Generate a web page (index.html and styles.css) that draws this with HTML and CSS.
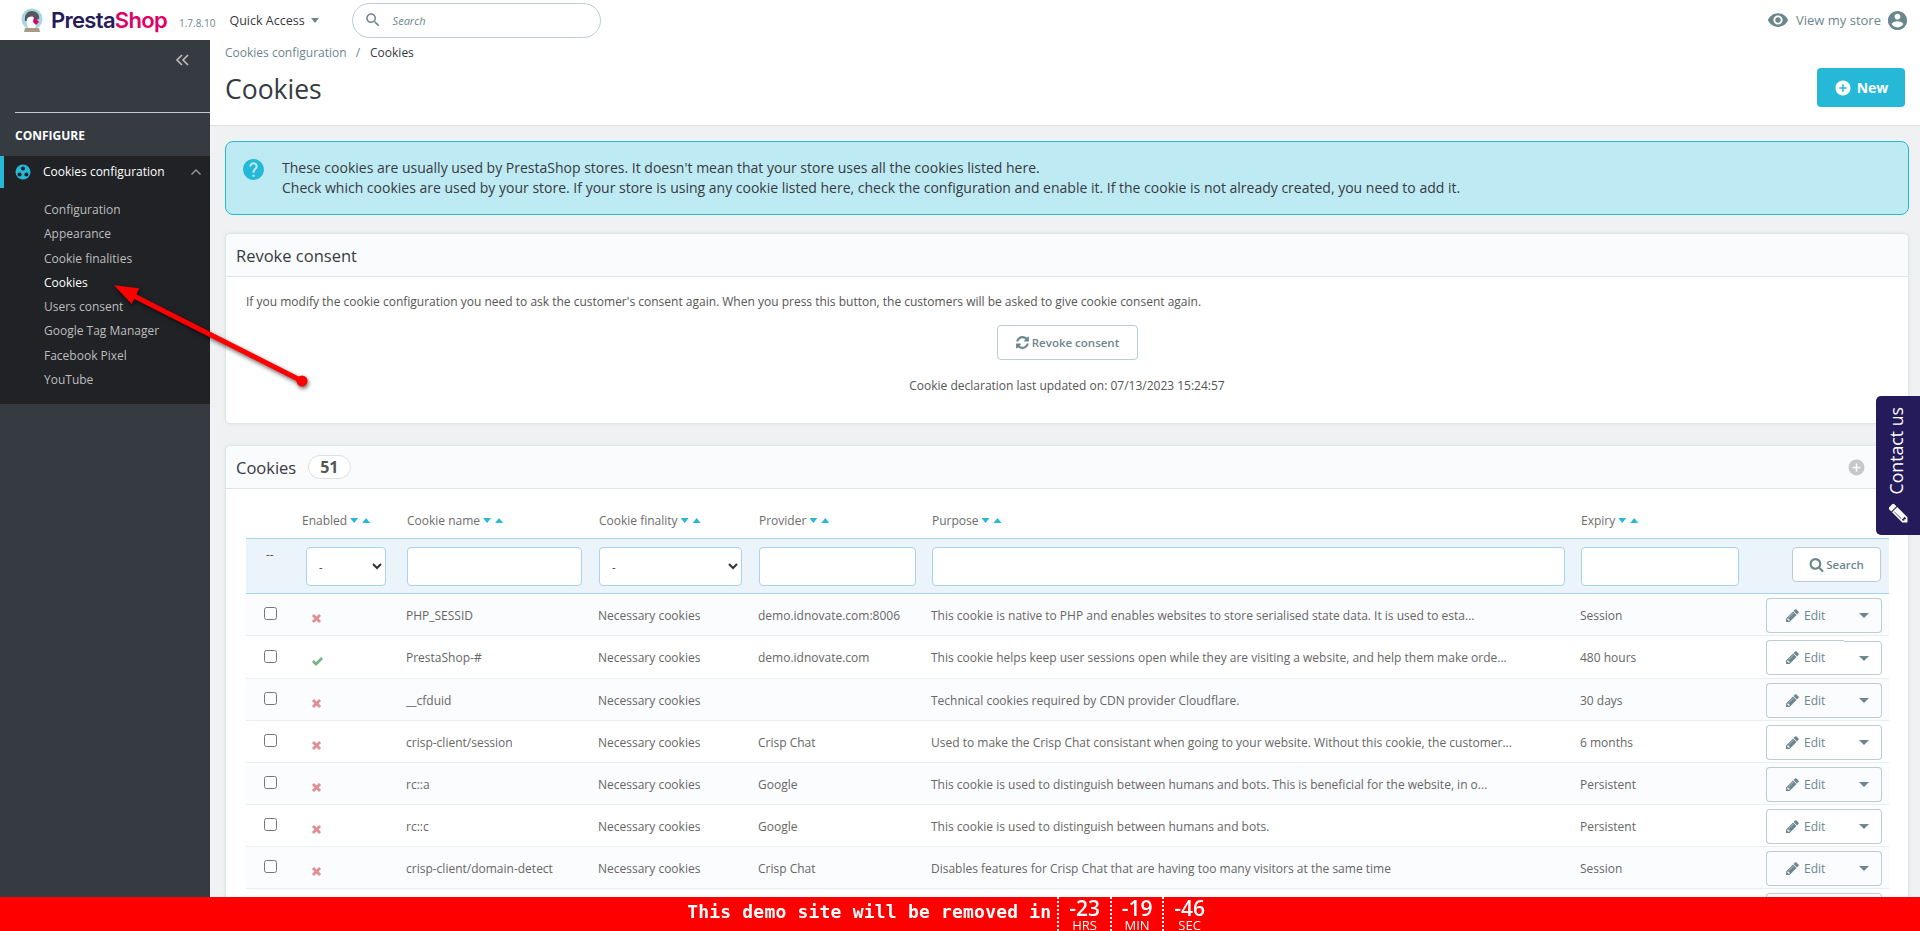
FILE: index.html
```html
<!DOCTYPE html>
<html lang="en">
<head>
    <meta charset="UTF-8">
    <meta name="viewport" content="width=device-width, initial-scale=1.0">
    <title>Cookies - PrestaShop</title>
    <link rel="stylesheet" href="styles.css">
</head>
<body>
    <!-- icon sprite -->
    <svg class="sprite" xmlns="http://www.w3.org/2000/svg">
        <symbol id="i-edit" viewBox="0 0 1792 1792"><path d="M491 1536l91-91-235-235-91 91v107h128v128h107zm523-928q0-22-22-22-10 0-17 7l-542 542q-7 7-7 17 0 22 22 22 10 0 17-7l542-542q7-7 7-17zm-54-192l416 416-832 832h-416v-416zm683 96q0 53-37 90l-166 166-416-416 166-165q36-38 90-38 53 0 91 38l235 234q37 39 37 91z"/></symbol>
        <symbol id="i-search" viewBox="0 0 24 24"><path d="M15.5 14h-.79l-.28-.27C15.41 12.59 16 11.11 16 9.5 16 5.91 13.09 3 9.5 3S3 5.91 3 9.5 5.91 16 9.5 16c1.61 0 3.09-.59 4.23-1.57l.27.28v.79l5 4.99L20.49 19l-4.99-5zm-6 0C7.01 14 5 11.99 5 9.5S7.01 5 9.5 5 14 7.01 14 9.5 11.99 14 9.5 14z"/></symbol>
        <symbol id="i-search-bold" viewBox="0 0 1792 1792"><path d="M1216 832q0-185-131.5-316.5t-316.5-131.5-316.5 131.5-131.5 316.5 131.5 316.5 316.5 131.5 316.5-131.5 131.5-316.5zm512 832q0 52-38 90t-90 38q-54 0-90-38l-343-342q-179 124-399 124-143 0-273.5-55.5t-225-150-150-225-55.5-273.5 55.5-273.5 150-225 225-150 273.5-55.5 273.5 55.5 225 150 150 225 55.5 273.5q0 220-124 399l343 343q37 37 37 90z"/></symbol>
        <symbol id="i-add" viewBox="0 0 24 24"><path d="M12 2C6.48 2 2 6.48 2 12s4.48 10 10 10 10-4.48 10-10S17.52 2 12 2zm5 11h-4v4h-2v-4H7v-2h4V7h2v4h4v2z"/></symbol>
        <symbol id="i-no" viewBox="0 0 12 12"><path d="M1 3.2 3.2 1 6 3.8 8.8 1 11 3.2 8.2 6 11 8.8 8.8 11 6 8.2 3.2 11 1 8.8 3.8 6z"/></symbol>
        <symbol id="i-yes" viewBox="0 0 14 12"><path d="M1 6.5 3 4.4 5.4 6.8 11 1.2 13 3.3 5.4 10.9z"/></symbol>
    </svg>

    <header class="topbar">
        <a class="logo">
            <svg class="logo-bird" viewBox="0 0 22 25" width="22" height="25">
                <circle cx="11" cy="11" r="10.5" fill="#a6d6e6"/>
                <path d="M4 13C3 6 7 3 11 3s8 3 7 8l-3 1-5 1z" fill="#55585c"/>
                <path d="M6 11c2-3 6-3 7-1l3 4-2 7H8c-2-3-3-6-2-10z" fill="#fff"/>
                <path d="M13 9l5 5-3 3-3-3z" fill="#df0067"/>
                <path d="M4 20h14l1 4H3z" fill="#a89a84"/>
            </svg>
            <span class="logo-text">Presta<b>Shop</b></span>
        </a>
        <span class="version">1.7.8.10</span>
        <span class="quick">Quick Access<i class="caret-down"></i></span>
        <div class="searchbox">
            <svg class="searchbox-icon" width="18" height="18"><use href="#i-search"/></svg>
            <span>Search</span>
        </div>
        <div class="top-right">
            <svg class="top-icon" viewBox="0 0 24 24" width="22" height="22"><path d="M12 4.5C7 4.5 2.73 7.61 1 12c1.73 4.39 6 7.5 11 7.5s9.27-3.11 11-7.5c-1.73-4.39-6-7.5-11-7.5zM12 17c-2.76 0-5-2.24-5-5s2.24-5 5-5 5 2.24 5 5-2.24 5-5 5zm0-8c-1.66 0-3 1.34-3 3s1.34 3 3 3 3-1.34 3-3-1.34-3-3-3z"/></svg>
            <span class="view-store">View my store</span>
            <svg class="top-icon" viewBox="0 0 24 24" width="23" height="23"><path d="M12 2C6.48 2 2 6.48 2 12s4.48 10 10 10 10-4.48 10-10S17.52 2 12 2zm0 3c1.66 0 3 1.34 3 3s-1.34 3-3 3-3-1.34-3-3 1.34-3 3-3zm0 14.2c-2.5 0-4.71-1.28-6-3.22.03-1.99 4-3.08 6-3.08 1.99 0 5.97 1.09 6 3.08-1.29 1.94-3.5 3.22-6 3.22z"/></svg>
        </div>
    </header>

    <div class="layout">
        <nav class="sidebar">
            <div class="collapse">
                <svg viewBox="0 0 15 12" width="15" height="12" fill="none" stroke="#bebebe" stroke-width="1.6"><path d="M7 1 2 6l5 5M13 1 8 6l5 5"/></svg>
            </div>
            <div class="nav-title">CONFIGURE</div>
            <div class="nav-group">
                <div class="nav-item">
                    <svg class="cookie-icon" viewBox="0 0 16 16" width="16" height="16">
                        <circle cx="8" cy="8" r="7.5" fill="#25b9d7"/>
                        <circle cx="8" cy="4.6" r="2" fill="#202226"/>
                        <circle cx="4.6" cy="10.4" r="2" fill="#202226"/>
                        <circle cx="11.4" cy="10.4" r="2" fill="#202226"/>
                    </svg>
                    <span>Cookies configuration</span>
                    <svg class="nav-chevron" viewBox="0 0 12 8" width="12" height="8" fill="none" stroke="#8f9296" stroke-width="1.5"><path d="M1.5 6.5 6 2l4.5 4.5"/></svg>
                </div>
                <ul class="subnav">
                    <li>Configuration</li>
                    <li>Appearance</li>
                    <li>Cookie finalities</li>
                    <li class="current">Cookies</li>
                    <li>Users consent</li>
                    <li>Google Tag Manager</li>
                    <li>Facebook Pixel</li>
                    <li>YouTube</li>
                </ul>
            </div>
        </nav>

        <main class="main">
            <div class="page-head">
                <div>
                    <div class="breadcrumb"><span class="crumb">Cookies configuration</span><span class="crumb-sep">/</span><span>Cookies</span></div>
                    <h1 class="page-title">Cookies</h1>
                </div>
                <button class="btn-new"><svg width="18" height="18"><use href="#i-add"/></svg>New</button>
            </div>

            <div class="content">
                <div class="alert">
                    <svg class="alert-icon" viewBox="0 0 24 24" width="25" height="25"><path d="M12 2C6.48 2 2 6.48 2 12s4.48 10 10 10 10-4.48 10-10S17.52 2 12 2zm1 17h-2v-2h2v2zm2.07-7.75l-.9.92C13.45 12.9 13 13.5 13 15h-2v-.5c0-1.1.45-2.1 1.17-2.83l1.24-1.26c.37-.36.59-.86.59-1.41 0-1.1-.9-2-2-2s-2 .9-2 2H8c0-2.21 1.79-4 4-4s4 1.79 4 4c0 .88-.36 1.68-.93 2.25z"/></svg>
                    <p>These cookies are usually used by PrestaShop stores. It doesn't mean that your store uses all the cookies listed here.<br>Check which cookies are used by your store. If your store is using any cookie listed here, check the configuration and enable it. If the cookie is not already created, you need to add it.</p>
                </div>

                <section class="panel">
                    <div class="panel-head">Revoke consent</div>
                    <div class="revoke-body">
                        <p class="revoke-text">If you modify the cookie configuration you need to ask the customer's consent again. When you press this button, the customers will be asked to give cookie consent again.</p>
                        <button class="btn-outline btn-revoke">
                            <svg viewBox="0 0 1792 1792" width="15" height="15"><path d="M1639 1056q0 5-1 7-64 268-268 434.5t-478 166.5q-146 0-282.5-55t-243.5-157l-129 129q-19 19-45 19t-45-19-19-45v-448q0-26 19-45t45-19h448q26 0 45 19t19 45-19 45l-137 137q71 66 161 102t187 36q134 0 250-65t186-179q11-17 53-117 8-23 30-23h192q13 0 22.5 9.5t9.5 22.5zm25-800v448q0 26-19 45t-45 19h-448q-26 0-45-19t-19-45 19-45l138-138q-148-137-349-137-134 0-250 65t-186 179q-11 17-53 117-8 23-30 23h-199q-13 0-22.5-9.5t-9.5-22.5v-7q65-268 270-434.5t480-166.5q146 0 284 55.5t245 156.5l130-129q19-19 45-19t45 19 19 45z"/></svg>Revoke consent
                        </button>
                        <p class="revoke-date">Cookie declaration last updated on: 07/13/2023 15:24:57</p>
                    </div>
                </section>

                <section class="panel panel-list">
                    <div class="panel-head">
                        <span>Cookies</span><span class="badge">51</span>
                        <svg class="panel-add" width="19" height="19"><use href="#i-add"/></svg>
                    </div>
                    <div class="table-wrap">
                        <table class="grid">
                            <colgroup>
                                <col class="c-check"><col class="c-enabled"><col class="c-name"><col class="c-finality"><col class="c-provider"><col class="c-purpose"><col class="c-expiry"><col class="c-actions">
                            </colgroup>
                            <thead>
                                <tr class="head-row">
                                    <th></th>
                                    <th class="th-enabled">Enabled<i class="sort"></i></th>
                                    <th>Cookie name<i class="sort"></i></th>
                                    <th>Cookie finality<i class="sort"></i></th>
                                    <th>Provider<i class="sort"></i></th>
                                    <th>Purpose<i class="sort"></i></th>
                                    <th>Expiry<i class="sort"></i></th>
                                    <th></th>
                                </tr>
                                <tr class="filter-row">
                                    <td class="filter-dash">--</td>
                                    <td><select class="f-enabled"><option>-</option></select></td>
                                    <td><input class="f-name" type="text"></td>
                                    <td><select class="f-finality"><option>-</option></select></td>
                                    <td><input class="f-provider" type="text"></td>
                                    <td><input class="f-purpose" type="text"></td>
                                    <td><input class="f-expiry" type="text"></td>
                                    <td class="cell-actions"><button class="btn-outline btn-search"><svg width="15" height="15"><use href="#i-search-bold"/></svg>Search</button></td>
                                </tr>
                            </thead>
                            <tbody>
                                <tr>
                                    <td class="cell-check"><input type="checkbox"></td>
                                    <td class="cell-state"><svg class="no" width="11" height="11"><use href="#i-no"/></svg></td>
                                    <td>PHP_SESSID</td>
                                    <td>Necessary cookies</td>
                                    <td>demo.idnovate.com:8006</td>
                                    <td>This cookie is native to PHP and enables websites to store serialised state data. It is used to esta...</td>
                                    <td>Session</td>
                                    <td class="cell-actions"><div class="edit"><span class="edit-main"><svg width="15" height="15"><use href="#i-edit"/></svg>Edit</span><span class="edit-more"><i class="caret-big"></i></span></div></td>
                                </tr>
                                <tr class="row-tall">
                                    <td class="cell-check"><input type="checkbox"></td>
                                    <td class="cell-state"><svg class="yes" width="13" height="11"><use href="#i-yes"/></svg></td>
                                    <td>PrestaShop-#</td>
                                    <td>Necessary cookies</td>
                                    <td>demo.idnovate.com</td>
                                    <td>This cookie helps keep user sessions open while they are visiting a website, and help them make orde...</td>
                                    <td>480 hours</td>
                                    <td class="cell-actions"><div class="edit edit-step"><span class="edit-main"><svg width="15" height="15"><use href="#i-edit"/></svg>Edit</span><span class="edit-more"><i class="caret-big"></i></span></div></td>
                                </tr>
                                <tr>
                                    <td class="cell-check"><input type="checkbox"></td>
                                    <td class="cell-state"><svg class="no" width="11" height="11"><use href="#i-no"/></svg></td>
                                    <td>__cfduid</td>
                                    <td>Necessary cookies</td>
                                    <td></td>
                                    <td>Technical cookies required by CDN provider Cloudflare.</td>
                                    <td>30 days</td>
                                    <td class="cell-actions"><div class="edit"><span class="edit-main"><svg width="15" height="15"><use href="#i-edit"/></svg>Edit</span><span class="edit-more"><i class="caret-big"></i></span></div></td>
                                </tr>
                                <tr>
                                    <td class="cell-check"><input type="checkbox"></td>
                                    <td class="cell-state"><svg class="no" width="11" height="11"><use href="#i-no"/></svg></td>
                                    <td>crisp-client/session</td>
                                    <td>Necessary cookies</td>
                                    <td>Crisp Chat</td>
                                    <td>Used to make the Crisp Chat consistant when going to your website. Without this cookie, the customer...</td>
                                    <td>6 months</td>
                                    <td class="cell-actions"><div class="edit"><span class="edit-main"><svg width="15" height="15"><use href="#i-edit"/></svg>Edit</span><span class="edit-more"><i class="caret-big"></i></span></div></td>
                                </tr>
                                <tr>
                                    <td class="cell-check"><input type="checkbox"></td>
                                    <td class="cell-state"><svg class="no" width="11" height="11"><use href="#i-no"/></svg></td>
                                    <td>rc::a</td>
                                    <td>Necessary cookies</td>
                                    <td>Google</td>
                                    <td>This cookie is used to distinguish between humans and bots. This is beneficial for the website, in o...</td>
                                    <td>Persistent</td>
                                    <td class="cell-actions"><div class="edit"><span class="edit-main"><svg width="15" height="15"><use href="#i-edit"/></svg>Edit</span><span class="edit-more"><i class="caret-big"></i></span></div></td>
                                </tr>
                                <tr>
                                    <td class="cell-check"><input type="checkbox"></td>
                                    <td class="cell-state"><svg class="no" width="11" height="11"><use href="#i-no"/></svg></td>
                                    <td>rc::c</td>
                                    <td>Necessary cookies</td>
                                    <td>Google</td>
                                    <td>This cookie is used to distinguish between humans and bots.</td>
                                    <td>Persistent</td>
                                    <td class="cell-actions"><div class="edit"><span class="edit-main"><svg width="15" height="15"><use href="#i-edit"/></svg>Edit</span><span class="edit-more"><i class="caret-big"></i></span></div></td>
                                </tr>
                                <tr>
                                    <td class="cell-check"><input type="checkbox"></td>
                                    <td class="cell-state"><svg class="no" width="11" height="11"><use href="#i-no"/></svg></td>
                                    <td>crisp-client/domain-detect</td>
                                    <td>Necessary cookies</td>
                                    <td>Crisp Chat</td>
                                    <td>Disables features for Crisp Chat that are having too many visitors at the same time</td>
                                    <td>Session</td>
                                    <td class="cell-actions"><div class="edit"><span class="edit-main"><svg width="15" height="15"><use href="#i-edit"/></svg>Edit</span><span class="edit-more"><i class="caret-big"></i></span></div></td>
                                </tr>
                                <tr>
                                    <td class="cell-check"></td>
                                    <td></td><td></td><td></td><td></td><td></td><td></td>
                                    <td class="cell-actions"><div class="edit"><span class="edit-main"></span><span class="edit-more"></span></div></td>
                                </tr>
                            </tbody>
                        </table>
                    </div>
                </section>
            </div>
        </main>
    </div>

    <!-- annotation arrow drawn over the page -->
    <svg class="annotation" viewBox="0 0 220 110" width="220" height="110">
        <path d="M24 11.3 49.3 14.3 41.7 30z" fill="#f00"/>
        <path d="M44 22 212 107" stroke="#f00" stroke-width="5" fill="none"/>
        <circle cx="212" cy="107" r="5.5" fill="#f00"/>
    </svg>

    <a class="contact-tab">
        <span>Contact us</span>
        <svg viewBox="0 0 1792 1792" width="22" height="22"><path d="M491 1536l91-91-235-235-91 91v107h128v128h107zm523-928q0-22-22-22-10 0-17 7l-542 542q-7 7-7 17 0 22 22 22 10 0 17-7l542-542q7-7 7-17zm-54-192l416 416-832 832h-416v-416zm683 96q0 53-37 90l-166 166-416-416 166-165q36-38 90-38 53 0 91 38l235 234q37 39 37 91z"/></svg>
    </a>

    <div class="demo-bar">
        <span class="demo-text">This demo site will be removed in</span>
        <div class="timer"><b>-23</b><small>HRS</small></div>
        <div class="timer"><b>-19</b><small>MIN</small></div>
        <div class="timer"><b>-46</b><small>SEC</small></div>
    </div>
</body>
</html>
```

FILE: styles.css
```css
* {
    box-sizing: border-box;
}

html, body {
    height: 100%;
}

body {
    margin: 0;
    overflow: hidden;
    font-family: "Open Sans", Arial, sans-serif;
    font-size: 12px;
    color: #363a41;
    background-color: #eff1f2;
}

.sprite {
    display: none;
}

/* top bar */
.topbar {
    display: flex;
    align-items: center;
    height: 40px;
    background-color: #fff;
    padding-right: 11px;
}

.logo {
    display: flex;
    align-items: center;
    margin-left: 21px;
}

.logo-bird {
    margin-right: 8px;
}

.logo-text {
    font-family: Inter, sans-serif;
    font-size: 22px;
    font-weight: 600;
    letter-spacing: -0.7px;
    color: #251b5b;
}

.logo-text b {
    font-weight: 600;
    color: #df0067;
}

.version {
    margin-left: 12px;
    margin-top: 5px;
    font-size: 10px;
    color: #6c868e;
}

.quick {
    margin-left: 14px;
    font-size: 12.5px;
    color: #363a41;
}

.caret-down {
    display: inline-block;
    margin-left: 6px;
    vertical-align: 2px;
    border-left: 4.5px solid transparent;
    border-right: 4.5px solid transparent;
    border-top: 5px solid #6c868e;
}

.searchbox {
    display: flex;
    align-items: center;
    width: 249px;
    height: 35px;
    margin-left: 33px;
    padding-left: 11px;
    border: 1px solid #bbcdd2;
    border-radius: 18px;
    font-size: 11px;
    font-style: italic;
    color: #6c868e;
}

.searchbox-icon {
    fill: #6c868e;
    margin-right: 11px;
}

.top-right {
    display: flex;
    align-items: center;
    margin-left: auto;
}

.top-icon {
    fill: #6c868e;
}

.view-store {
    margin: 0 5px 0 7px;
    font-size: 13px;
    color: #6c868e;
}

/* layout */
.layout {
    display: flex;
    height: calc(100% - 40px);
}

.sidebar {
    flex: 0 0 210px;
    background-color: #363a41;
    color: #fff;
}

.collapse {
    display: flex;
    justify-content: flex-end;
    align-items: flex-start;
    height: 73px;
    margin-left: 15px;
    padding: 14px 20px 0 0;
    border-bottom: 1px solid #bbcdd2;
}

.nav-title {
    height: 43px;
    padding: 14px 0 0 15px;
    font-size: 12px;
    font-weight: 700;
}

.nav-group {
    background-color: #202226;
    padding-bottom: 12px;
}

.nav-item {
    display: flex;
    align-items: center;
    height: 32px;
    padding: 0 0 1px 11px;
    border-left: 4px solid #25b9d7;
    color: #fff;
}

.cookie-icon {
    margin-right: 12px;
}

.nav-chevron {
    margin-left: 25px;
}

.subnav {
    list-style: none;
    margin: 0;
    padding: 10px 0 0 44px;
    color: #bebebe;
}

.subnav li {
    height: 24.3px;
    line-height: 24px;
}

.subnav .current {
    color: #fff;
}

/* page head */
.main {
    flex: 1;
    min-width: 0;
}

.page-head {
    display: flex;
    justify-content: space-between;
    height: 86px;
    padding: 0 15px;
    background-color: #fff;
    border-bottom: 1px solid #dfdfdf;
}

.breadcrumb {
    padding-top: 5px;
    line-height: 16px;
}

.crumb {
    color: #6c868e;
}

.crumb-sep {
    margin: 0 10px 0 9px;
    color: #6c868e;
}

.page-title {
    margin: 10px 0 0;
    font-size: 26.5px;
    font-weight: 400;
    line-height: 36px;
}

.btn-new {
    display: flex;
    align-items: center;
    justify-content: center;
    width: 88px;
    height: 39px;
    margin-top: 28px;
    padding: 0;
    border: none;
    border-radius: 4px;
    background-color: #25b9d7;
    color: #fff;
    font-family: inherit;
    font-size: 14px;
    font-weight: 700;
}

.btn-new svg {
    fill: #fff;
    margin-right: 5px;
}

/* content */
.content {
    padding: 15px 11px 0 15px;
}

.alert {
    display: flex;
    height: 74px;
    margin-bottom: 18px;
    padding: 15px 0 0 15px;
    border: 1px solid #25b9d7;
    border-radius: 8px;
    background-color: #beeaf3;
}

.alert p {
    margin: 1px 0 0 16px;
    line-height: 20px;
    font-size: 14px;
}

.alert-icon {
    fill: #25b9d7;
    flex: none;
}

.panel {
    background-color: #fff;
    border: 1px solid #dbe6e9;
    border-radius: 5px;
    box-shadow: 0 0 4px rgba(0, 0, 0, 0.06);
}

.panel-head {
    display: flex;
    align-items: center;
    height: 43px;
    padding: 0 10px;
    background-color: #fafbfc;
    border-bottom: 1px solid #dbe6e9;
    border-radius: 5px 5px 0 0;
    font-size: 16.5px;
}

.revoke-body {
    height: 146px;
    padding-top: 17px;
    text-align: center;
}

.revoke-text {
    margin: 0 0 15px;
    padding-left: 20px;
    text-align: left;
    font-size: 12px;
    line-height: 16px;
    color: #555;
}

.btn-outline {
    display: inline-flex;
    align-items: center;
    justify-content: center;
    padding: 0;
    border: 1px solid #bbcdd2;
    border-radius: 4px;
    background-color: #fff;
    color: #6c868e;
    font-family: inherit;
    font-size: 11.5px;
    font-weight: 600;
}

.btn-outline svg {
    fill: #6c868e;
    margin-right: 2px;
}

.btn-revoke {
    width: 141px;
    height: 35px;
}

.revoke-date {
    margin: 17px 0 0;
    font-size: 12px;
    line-height: 18px;
    color: #555;
}

.panel-list {
    margin-top: 21px;
}

.badge {
    height: 24px;
    margin-left: 12px;
    padding: 0 11px;
    border: 1px solid #dfdfdf;
    border-radius: 12px;
    background-color: #fff;
    font-size: 16px;
    font-weight: 700;
    line-height: 22px;
    color: #555;
}

.panel-add {
    fill: #c8c8c8;
    margin-left: auto;
    margin-right: 32px;
}

/* table */
.table-wrap {
    padding: 0 19px 0 20px;
}

.grid {
    width: 1643px;
    table-layout: fixed;
    border-collapse: separate;
    border-spacing: 0;
    font-size: 12px;
    color: #666;
}

.c-check { width: 53px; }
.c-enabled { width: 101px; }
.c-name { width: 192px; }
.c-finality { width: 160px; }
.c-provider { width: 173px; }
.c-purpose { width: 649px; }
.c-expiry { width: 186px; }
.c-actions { width: 129px; }

.head-row {
    height: 49px;
}

.head-row th {
    padding: 14px 0 0 7px;
    font-weight: 400;
    text-align: left;
    white-space: nowrap;
    color: #6c6c6c;
}

.head-row .th-enabled {
    padding-left: 3px;
}

.sort {
    display: inline-block;
    width: 20px;
    height: 5px;
    margin-left: 3px;
    vertical-align: 2px;
    background-color: #25b9d7;
    clip-path: polygon(0 0, 8px 0, 4px 5px, 12px 5px, 16px 0, 20px 5px, 12px 5px, 4px 5px);
}

.filter-row {
    height: 56px;
}

.filter-row td {
    padding: 0 0 0 7px;
    background-color: #ebf4fb;
    border-top: 1px solid #a4d5ed;
    border-bottom: 1px solid #a4d5ed;
}

.filter-row input, .filter-row select {
    display: block;
    height: 39px;
    border: 1px solid #a4d5ed;
    border-radius: 4px;
    background-color: #fff;
    font-family: inherit;
    font-size: 11px;
    color: #333;
    padding: 0 6px 0 8px;
}

.filter-row .filter-dash {
    padding: 0 0 24px 20px;
    color: #555;
}

.f-enabled { width: 80px; }
.f-name { width: 175px; }
.f-finality { width: 143px; }
.f-provider { width: 157px; }
.f-purpose { width: 633px; }
.f-expiry { width: 158px; }

.filter-row .cell-actions {
    text-align: right;
    padding: 0 8px 3px 0;
}

.btn-search {
    width: 89px;
    height: 35px;
}

tbody tr {
    height: 42px;
}

tbody tr.row-tall {
    height: 43px;
}

tbody tr:nth-child(odd) td {
    background-color: #fbfcfe;
}

tbody td {
    padding: 1px 0 0 6px;
    border-bottom: 1px solid #e8edee;
    white-space: nowrap;
}

.cell-check input {
    display: block;
    margin: 0 0 3px 12px;
}

tbody .cell-state {
    padding: 10px 0 0 12px;
}

.no {
    fill: #e08f95;
}

.yes {
    fill: #70b580;
}

tbody .cell-actions {
    padding: 1px 7px 0 6px;
}

.edit {
    display: flex;
    width: 116px;
    height: 35px;
    color: #6c868e;
}

.edit-main {
    display: flex;
    align-items: center;
    flex: 1;
    padding-left: 18px;
    border: 1px solid #bbcdd2;
    border-right: none;
    border-radius: 4px 0 0 4px;
    font-size: 12px;
}

.edit-main svg {
    fill: #6c868e;
    margin-right: 4px;
}

.edit-more {
    display: flex;
    align-items: center;
    justify-content: center;
    width: 38px;
    padding-left: 2px;
    border: 1px solid #bbcdd2;
    border-left: none;
    border-radius: 0 4px 4px 0;
}

.edit-step .edit-more {
    margin-top: 1px;
}

.caret-big {
    border-left: 5px solid transparent;
    border-right: 5px solid transparent;
    border-top: 5px solid #6c868e;
}

/* things on top of the page */
.annotation {
    position: fixed;
    left: 90px;
    top: 274px;
    overflow: visible;
    filter: drop-shadow(1px 2px 2px rgba(0, 0, 0, 0.6));
}

.contact-tab {
    position: fixed;
    right: 0;
    top: 396px;
    display: flex;
    flex-direction: column;
    align-items: center;
    justify-content: center;
    width: 44px;
    height: 139px;
    background-color: #251b5b;
    border-radius: 5px 0 0 5px;
    color: #fff;
    font-size: 17.7px;
}

.contact-tab span {
    writing-mode: vertical-rl;
    transform: rotate(180deg);
    margin-bottom: 7px;
    margin-right: 5px;
}

.contact-tab svg {
    fill: #fff;
    transform: rotate(-90deg);
}

.demo-bar {
    position: fixed;
    left: 0;
    right: 0;
    bottom: 0;
    display: flex;
    justify-content: center;
    height: 34px;
    padding-right: 18px;
    background-color: #f00;
    color: #fff;
}

.demo-text {
    margin-right: 6px;
    font-family: "DejaVu Sans Mono", monospace;
    font-size: 18px;
    font-weight: 700;
    line-height: 29px;
    letter-spacing: 0.2px;
}

.timer {
    display: flex;
    flex-direction: column;
    align-items: center;
    width: 52.5px;
    border-left: 2px dotted #fff;
}

.timer b {
    font-size: 21px;
    font-weight: 600;
    line-height: 22px;
}

.timer small {
    font-size: 13px;
    line-height: 12px;
}
```
